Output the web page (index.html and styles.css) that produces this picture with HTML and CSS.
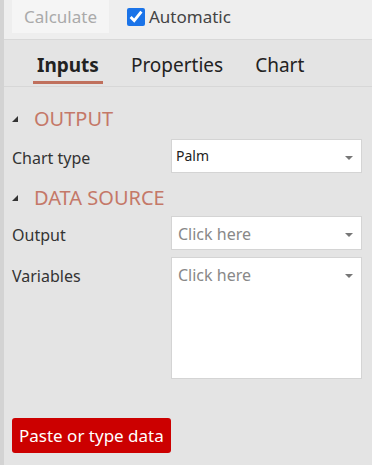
FILE: index.html
```html
<!DOCTYPE html>
<html lang="en">
<head>
  <meta charset="UTF-8">
  <meta name="viewport" content="width=device-width, initial-scale=1.0">
  <title>Chart Inputs</title>
  <link rel="stylesheet" href="styles.css">
</head>
<body>
<div id="panel">
  <div id="toolbar">
    <button class="calc" disabled>Calculate</button>
    <label class="auto"><input type="checkbox" checked> Automatic</label>
  </div>

  <div id="tabs">
    <div class="tab active">Inputs</div>
    <div class="tab">Properties</div>
    <div class="tab">Chart</div>
  </div>

  <div id="content">
    <div class="section"><span class="tri"></span>OUTPUT</div>
    <div class="row first">
      <div class="label">Chart type</div>
      <div class="select"><span class="value">Palm</span><span class="caret"></span></div>
    </div>

    <div class="section"><span class="tri"></span>DATA SOURCE</div>
    <div class="row">
      <div class="label">Output</div>
      <div class="select"><span class="placeholder">Click here</span><span class="caret"></span></div>
    </div>
    <div class="row">
      <div class="label">Variables</div>
      <div class="select tall"><span class="placeholder">Click here</span><span class="caret"></span></div>
    </div>

    <button class="paste">Paste or type data</button>
  </div>
</div>
</body>
</html>
```

FILE: styles.css
```css
body {
  margin: 0;
  background-color: #e4e4e4;
  font-family: 'Noto Sans', sans-serif;
  color: #333333;
}

#panel {
  border-left: 4px solid #d3d3d3;
  height: 465px;
  box-sizing: border-box;
}

#toolbar {
  height: 39px;
  background-color: #eeeeee;
  border-bottom: 1px solid #d8d8d8;
  display: flex;
  align-items: flex-start;
  padding-left: 8px;
}

.calc {
  width: 97px;
  height: 33px;
  background-color: #f5f5f5;
  color: #aaaaaa;
  border: none;
  font-family: inherit;
  font-size: 17px;
  padding: 0;
}

.auto {
  margin-left: 18px;
  height: 33px;
  display: flex;
  align-items: center;
  font-size: 17px;
  color: #444444;
  gap: 4px;
}

.auto input {
  width: 18px;
  height: 18px;
  margin: 0;
  accent-color: #1a73e8;
}

#tabs {
  display: flex;
  gap: 24px;
  padding-left: 29px;
  height: 46px;
  border-bottom: 1px solid #d7d7d7;
}

.tab {
  padding: 12px 4px 0;
  font-size: 19px;
  color: #222222;
  box-sizing: border-box;
  height: 44px;
}

.tab.active {
  font-weight: bold;
  border-bottom: 3px solid #c0705d;
}

#content {
  padding: 18px 10px 0 8px;
}

.section {
  display: flex;
  align-items: center;
  font-size: 20px;
  color: #c47868;
  height: 26px;
}

.tri {
  width: 0;
  height: 0;
  border-left: 6px solid transparent;
  border-bottom: 6px solid #333333;
  margin: 2px 16px 0 0;
}

.row {
  display: flex;
  margin-top: 6px;
}

.row.first {
  margin-top: 8px;
}

.row + .section {
  margin-top: 11px;
}

.row + .row {
  margin-top: 7px;
}

.label {
  width: 159px;
  font-size: 16px;
  padding-top: 8px;
}

.select {
  flex: 1;
  height: 34px;
  background-color: #ffffff;
  border: 1px solid #d4d4d4;
  box-sizing: border-box;
  display: flex;
  justify-content: space-between;
  padding: 6px 8px 0 6px;
  font-size: 16px;
}

.select.tall {
  height: 122px;
}

.value {
  color: #222222;
  font-size: 14px;
  margin-left: -2px;
}

.placeholder {
  color: #888888;
}

.caret {
  width: 0;
  height: 0;
  border-left: 4px solid transparent;
  border-right: 4px solid transparent;
  border-top: 4px solid #777777;
  margin-top: 10px;
}

.paste {
  margin-top: 39px;
  background-color: #cc0000;
  color: #ffffff;
  border: none;
  border-radius: 3px;
  height: 35px;
  padding: 0 7px;
  font-family: inherit;
  font-size: 17px;
}
```
